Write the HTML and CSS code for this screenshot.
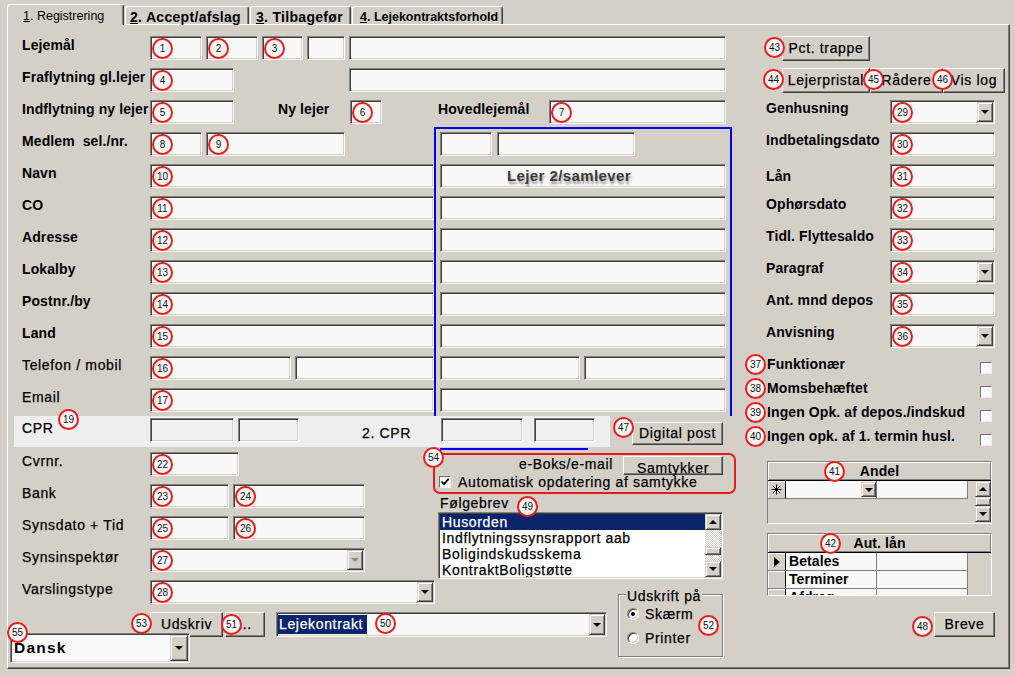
FILE: index.html
```html
<!DOCTYPE html>
<html lang="da">
<head>
<meta charset="utf-8">
<title>Registrering</title>
<link rel="stylesheet" href="styles.css">
</head>
<body>
<div class="win">
  <div class="tabs">
    <div class="tab active"><u>1</u>. Registrering</div>
    <div class="tab t2"><u>2</u>. Accept/afslag</div>
    <div class="tab t3"><u>3</u>. Tilbagefør</div>
    <div class="tab t4"><u>4</u>. Lejekontraktsforhold</div>
  </div>
  <div class="panel">
    <div class="main">
      <div class="row">
        <div class="lbl">Lejemål</div>
        <div class="tb w52"><span class="nb">1</span></div>
        <div class="tb w52 ml4"><span class="nb">2</span></div>
        <div class="tb w41 ml4"><span class="nb">3</span></div>
        <div class="tb w38 ml4"></div>
        <div class="tb w377 ml4"></div>
      </div>
      <div class="row">
        <div class="lbl">Fraflytning gl.lejer</div>
        <div class="tb w84"><span class="nb">4</span></div>
        <div class="tb w377 ml115"></div>
      </div>
      <div class="row">
        <div class="lbl">Indflytning ny lejer</div>
        <div class="tb w84"><span class="nb">5</span></div>
        <div class="lbl nylejer">Ny lejer</div>
        <div class="tb w32"><span class="nb">6</span></div>
        <div class="lbl hoved">Hovedlejemål</div>
        <div class="tb w177"><span class="nb">7</span></div>
      </div>

      <div class="mid">
        <div class="midl">
          <div class="row"><div class="lbl">Medlem&nbsp; sel./nr.</div><div class="tb w52"><span class="nb">8</span></div><div class="tb w139 ml4"><span class="nb">9</span></div></div>
          <div class="row"><div class="lbl">Navn</div><div class="tb w284"><span class="nb">10</span></div></div>
          <div class="row"><div class="lbl">CO</div><div class="tb w284"><span class="nb">11</span></div></div>
          <div class="row"><div class="lbl">Adresse</div><div class="tb w284"><span class="nb">12</span></div></div>
          <div class="row"><div class="lbl">Lokalby</div><div class="tb w284"><span class="nb">13</span></div></div>
          <div class="row"><div class="lbl">Postnr./by</div><div class="tb w284"><span class="nb">14</span></div></div>
          <div class="row"><div class="lbl">Land</div><div class="tb w284"><span class="nb">15</span></div></div>
          <div class="row"><div class="lbl ct">Telefon / mobil</div><div class="tb w141"><span class="nb">16</span></div><div class="tb w139 ml4"></div></div>
          <div class="row"><div class="lbl ct">Email</div><div class="tb w284"><span class="nb">17</span></div></div>
        </div>
        <div class="bluebox">
          <div class="row"><div class="tb w52"></div><div class="tb w138 ml5"></div></div>
          <div class="row"><div class="tb w286 lejer2">Lejer 2/samlever</div></div>
          <div class="row"><div class="tb w286"></div></div>
          <div class="row"><div class="tb w286"></div></div>
          <div class="row"><div class="tb w286"></div></div>
          <div class="row"><div class="tb w286"></div></div>
          <div class="row"><div class="tb w286"></div></div>
          <div class="row"><div class="tb w140"></div><div class="tb w142 ml4"></div></div>
          <div class="row"><div class="tb w286"></div></div>
        </div>
      </div>

      <div class="cprrow">
        <div class="band">
          <div class="ct cprl">CPR<span class="nb nb19">19</span></div>
          <div class="tb tbband w84"></div>
          <div class="tb tbband w61 ml4"></div>
          <div class="ct cpr2">2. CPR</div>
          <div class="tb tbband w82 ml1"></div>
          <div class="tb tbband w61 ml11"></div>
          <div class="blueline"></div>
        </div>
        <div class="btn ct dpost">Digital post<span class="nb nb47">47</span></div>
      </div>

      <div class="lowt">
        <div class="lowl">
          <div class="row"><div class="lbl ct">Cvrnr.</div><div class="tb w89"><span class="nb">22</span></div></div>
          <div class="row"><div class="lbl ct">Bank</div><div class="tb w79"><span class="nb">23</span></div><div class="tb w132 ml4"><span class="nb">24</span></div></div>
          <div class="row"><div class="lbl ct">Synsdato + Tid</div><div class="tb w79"><span class="nb">25</span></div><div class="tb w132 ml4"><span class="nb">26</span></div></div>
          <div class="row"><div class="lbl ct">Synsinspektør</div><div class="tb cb w215"><span class="nb">27</span><span class="arr dis"></span></div></div>
          <div class="row"><div class="lbl ct">Varslingstype</div><div class="tb cb w285"><span class="nb">28</span><span class="arr"></span></div></div>
        </div>
        <div class="lowr">
          <div class="redbox">
            <span class="nb nb54">54</span>
            <div class="rb1"><span class="ct">e-Boks/e-mail</span><div class="btn ct samt">Samtykker</div></div>
            <div class="rb2"><span class="chk on"><svg width="10" height="10" viewBox="0 0 10 10"><path d="M1.5 4.5l2.5 2.6 4.6-5.2" fill="none" stroke="#000" stroke-width="1.8"/></svg></span><span class="ct">Automatisk opdatering af samtykke</span></div>
          </div>
          <div class="folg ct">Følgebrev<span class="nb nb49">49</span></div>
          <div class="lb">
            <div class="lbitems">
              <div class="lbi selected">Husorden</div>
              <div class="lbi">Indflytningssynsrapport aab</div>
              <div class="lbi">Boligindskudsskema</div>
              <div class="lbi">KontraktBoligstøtte</div>
            </div>
            <div class="vsb">
              <div class="sbtn up"></div>
              <div class="track"><div class="thumb"></div></div>
              <div class="sbtn down"></div>
            </div>
          </div>
        </div>
      </div>

      <div class="lowb">
        <div class="bl">
          <div class="urow">
            <div class="btn ct udsk">Udskriv<span class="nb nb53">53</span></div>
            <div class="btn ct dots">...<span class="nb nb51">51</span></div>
            <div class="tb cb w331 lk"><span class="sel ct">Lejekontrakt</span><span class="nb nb50">50</span><span class="arr"></span></div>
          </div>
          <div class="tb cb dansk"><span class="dtxt">Dansk</span><span class="nb nb55">55</span><span class="arr big"></span></div>
        </div>
        <div class="grp">
          <span class="legend ct">Udskrift på</span>
          <div class="rrow"><span class="radio on"></span><span class="ct">Skærm</span></div>
          <div class="rrow"><span class="radio"></span><span class="ct">Printer</span></div>
          <span class="nb nb52">52</span>
        </div>
      </div>
    </div>

    <div class="side">
      <div class="srow"><div class="btn ct pct">Pct. trappe<span class="nb nb43">43</span></div></div>
      <div class="srow mt7">
        <div class="btn ct lp">Lejerpristal<span class="nb nb44">44</span></div>
        <div class="btn ct rad">Rådere<span class="nb nb45">45</span></div>
        <div class="btn ct vis">Vis log<span class="nb nb46">46</span></div>
      </div>
      <div class="sfields">
        <div class="row"><div class="slbl">Genhusning</div><div class="tb cb w105"><span class="nb">29</span><span class="arr"></span></div></div>
        <div class="row"><div class="slbl">Indbetalingsdato</div><div class="tb w105"><span class="nb">30</span></div></div>
        <div class="row"><div class="slbl lan">Lån</div><div class="tb w105"><span class="nb">31</span></div></div>
        <div class="row"><div class="slbl">Ophørsdato</div><div class="tb w105"><span class="nb">32</span></div></div>
        <div class="row"><div class="slbl">Tidl. Flyttesaldo</div><div class="tb w105"><span class="nb">33</span></div></div>
        <div class="row"><div class="slbl">Paragraf</div><div class="tb cb w105"><span class="nb">34</span><span class="arr"></span></div></div>
        <div class="row"><div class="slbl">Ant. mnd depos</div><div class="tb w105"><span class="nb">35</span></div></div>
        <div class="row"><div class="slbl">Anvisning</div><div class="tb cb w105"><span class="nb">36</span><span class="arr"></span></div></div>
      </div>
      <div class="checks">
        <div class="crow"><span class="nb nbc">37</span><span class="clbl">Funktionær</span><span class="chk"></span></div>
        <div class="crow"><span class="nb nbc">38</span><span class="clbl">Momsbehæftet</span><span class="chk"></span></div>
        <div class="crow"><span class="nb nbc">39</span><span class="clbl">Ingen Opk. af depos./indskud</span><span class="chk"></span></div>
        <div class="crow"><span class="nb nbc">40</span><span class="clbl">Ingen opk. af 1. termin husl.</span><span class="chk"></span></div>
      </div>
      <div class="grid andel">
        <div class="ghead">Andel<span class="nb nb41">41</span></div>
        <div class="gbody">
          <div class="gcells">
            <div class="gr">
              <div class="gind"><svg width="11" height="11" viewBox="0 0 11 11"><path d="M5.5 0.5V10.5M0.5 5.5H10.5M1.9 1.9L9.1 9.1M9.1 1.9L1.9 9.1" stroke="#000" stroke-width="1"/></svg></div>
              <div class="gc gcw1 gcombo"><span class="arr sm"></span></div>
              <div class="gc gcw2"></div>
            </div>
          </div>
          <div class="gsb">
            <div class="sbtn up"></div>
            <div class="thumb2"></div>
            <div class="sbtn down"></div>
          </div>
        </div>
      </div>
      <div class="grid aut">
        <div class="ghead">Aut. lån<span class="nb nb42">42</span></div>
        <div class="gbody">
          <div class="gcells">
            <div class="gr"><div class="gind"><span class="tri"></span></div><div class="gc gcw1 gt">Betales</div><div class="gc gcw2"></div></div>
            <div class="gr"><div class="gind"></div><div class="gc gcw1 gt">Terminer</div><div class="gc gcw2"></div></div>
            <div class="gr"><div class="gind"></div><div class="gc gcw1 gt">Afdrag</div><div class="gc gcw2"></div></div>
          </div>
        </div>
      </div>
      <div class="brow"><div class="btn ct breve">Breve<span class="nb nb48">48</span></div></div>
    </div>
  </div>
</div>
</body>
</html>
```
FILE: styles.css
```css
* { box-sizing: border-box; }
html, body { margin: 0; padding: 0; }
body { background: #d4d0c8; font-family: "Liberation Sans", Arial, sans-serif; color: #000; }
.win { width: 1014px; height: 676px; overflow: hidden; background: #d4d0c8; }

/* tabs */
.tabs { display: flex; align-items: flex-start; height: 24px; padding: 4px 0 0 7px; position: relative; z-index: 2; }
.tab { height: 18px; margin-top: 2px; margin-left: 1px; background: #d4d0c8; border-top: 1px solid #fff; border-left: 1px solid #fff; border-right: 1px solid #404040; box-shadow: inset -1px 0 #808080; border-radius: 3px 3px 0 0; font-weight: bold; font-size: 14px; line-height: 16px; padding-top: 2px; white-space: nowrap; letter-spacing: 0.3px; }
.tab.active { height: 21px; margin-top: 0; margin-left: 0; width: 117px; font-weight: normal; font-size: 12.5px; padding-left: 15px; padding-top: 3px; letter-spacing: 0; }
.t2 { width: 124px; padding-left: 4px; }
.t3 { width: 101px; padding-left: 5px; }
.t4 { padding-left: 7px; padding-right: 4px; font-size: 12.5px; letter-spacing: 0; }

/* panel */
.panel { margin-left: 7px; width: 1003px; height: 645px; border-top: 1px solid #fff; border-left: 1px solid #fff; border-right: 1px solid #404040; border-bottom: 1px solid #404040; box-shadow: inset -1px -1px #808080; display: flex; }
.main { width: 737px; flex: none; padding: 11px 0 0 14px; }
.side { width: 262px; flex: none; padding-top: 11px; }

/* rows and labels */
.row { display: flex; align-items: flex-start; height: 24px; }
.row + .row { margin-top: 8px; }
.lbl { width: 128px; flex: none; font-weight: bold; font-size: 14px; line-height: 16px; margin-top: 1px; letter-spacing: 0.1px; white-space: nowrap; }
.ct { font-size: 14px; letter-spacing: 0.65px; font-weight: normal; white-space: nowrap; -webkit-text-stroke: 0.25px #000; }
.lbl.ct { font-size: 14px; letter-spacing: 0.65px; font-weight: normal; }
.nylejer { width: 72px; margin-left: 44px; }
.hoved { width: 111px; margin-left: 56px; }
.slbl { width: 124px; flex: none; font-weight: bold; font-size: 14px; line-height: 16px; letter-spacing: 0.1px; white-space: nowrap; }
.slbl.lan { margin-top: 4px; }

/* text boxes */
.tb { position: relative; flex: none; height: 24px; background: #f8f8f8; border: 1px solid; border-color: #808080 #fff #fff #808080; box-shadow: inset 1px 1px #404040, inset -1px -1px #d4d0c8; }
.tbband { background: #f1f1f1; margin-top: 2px; }
.w32 { width: 32px; } .w38 { width: 38px; } .w41 { width: 41px; } .w52 { width: 52px; }
.w61 { width: 61px; } .w79 { width: 79px; } .w82 { width: 82px; } .w84 { width: 84px; }
.w89 { width: 89px; } .w105 { width: 105px; } .w132 { width: 132px; } .w138 { width: 138px; }
.w139 { width: 139px; } .w140 { width: 140px; } .w141 { width: 141px; } .w142 { width: 142px; }
.w177 { width: 177px; } .w215 { width: 215px; } .w284 { width: 284px; } .w285 { width: 285px; }
.w286 { width: 286px; } .w331 { width: 331px; } .w377 { width: 377px; }
.ml1 { margin-left: 1px; } .ml4 { margin-left: 4px; } .ml5 { margin-left: 5px; } .ml11 { margin-left: 11px; } .ml115 { margin-left: 115px; }
.mt7 { margin-top: 7px; }

/* combo */
.cb { display: flex; padding: 1px; }
.arr { margin-left: auto; flex: none; width: 16px; height: 100%; background: #d4d0c8; border: 1px solid; border-color: #d4d0c8 #404040 #404040 #d4d0c8; box-shadow: inset 1px 1px #fff, inset -1px -1px #808080; display: flex; align-items: center; justify-content: center; }
.arr::after { content: ""; border-left: 4px solid transparent; border-right: 4px solid transparent; border-top: 4px solid #000; }
.arr.dis::after { border-top-color: #8a8a8a; }
.arr.big { width: 18px; }
.arr.sm { width: 15px; height: 15px; }

/* red number badges */
.nb { position: absolute; left: 1px; top: 1px; width: 21px; height: 21px; border: 2px solid #ec1c1c; border-radius: 50%; background: #f9f9f9; font-family: "Liberation Sans", Arial, sans-serif; font-size: 10px; font-weight: normal; letter-spacing: 0; line-height: 17px; text-align: center; color: #111; z-index: 3; -webkit-text-stroke: 0; }
.nb19 { left: 36px; top: -11px; }
.nb47 { left: -20px; top: -6px; }
.nb54 { left: -12px; top: -8px; }
.nb49 { left: 77px; top: 2px; }
.nb53 { left: -20px; top: 0; }
.nb51 { left: -5px; top: 1px; }
.nb50 { left: 98px; top: 0; }
.nb52 { left: 79px; top: 20px; }
.nb55 { left: -4px; top: -12px; }
.nb43 { left: -19px; top: 0; }
.nb44 { left: -20px; top: 0; }
.nb45 { left: -8px; top: 0; }
.nb46 { left: -12px; top: 0; }
.nbc { left: 0; top: 2px; }
.nb41 { left: 56px; top: -1px; }
.nb42 { left: 52px; top: -1px; }
.nb48 { left: -23px; top: 3px; }

/* middle block */
.mid { display: flex; margin-top: 3px; height: 289px; }
.midl { width: 412px; flex: none; padding-top: 5px; }
.bluebox { width: 298px; flex: none; border: 2px solid #0000ee; border-bottom: none; padding: 3px 4px 0 4px; }
.lejer2 { font-weight: bold; font-size: 15px; letter-spacing: 0.4px; color: #3a3a3a; line-height: 22px; padding-left: 66px; text-shadow: 1px 3px 2px #9c9c9c; white-space: nowrap; }

/* CPR row */
.cprrow { display: flex; align-items: flex-start; height: 31px; }
.band { position: relative; display: flex; align-items: flex-start; width: 596px; height: 31px; margin-left: -8px; padding-left: 8px; background: #eeeeee; flex: none; }
.cprl { position: relative; width: 128px; flex: none; margin-top: 4px; line-height: 16px; }
.cpr2 { width: 78px; flex: none; margin-left: 63px; margin-top: 9px; line-height: 16px; }
.blueline { position: absolute; left: 426px; top: 32px; width: 148px; height: 2px; background: #0000ee; }

/* buttons */
.btn { position: relative; flex: none; height: 25px; background: #d4d0c8; border: 1px solid; border-color: #fff #404040 #404040 #fff; box-shadow: inset -1px -1px #808080; text-align: center; line-height: 23px; white-space: nowrap; }
.dpost { margin-left: 22px; margin-top: 6px; width: 91px; height: 23px; line-height: 21px; }

/* lower area */
.lowt { display: flex; align-items: flex-start; }
.lowl { width: 411px; flex: none; padding-top: 5px; }
.lowr { width: 303px; flex: none; }
.redbox { position: relative; width: 303px; height: 41px; margin-top: 6px; border: 2px solid #e51c1c; border-radius: 7px; }
.rb1 { display: flex; justify-content: flex-end; align-items: flex-start; height: 18px; }
.rb1 > .ct { line-height: 16px; margin-top: 1px; }
.samt { width: 100px; height: 19px; margin-top: -1px; margin-left: 10px; margin-right: 11px; line-height: 10px; padding-top: 3px; }
.rb2 { display: flex; align-items: center; height: 12px; margin-top: 3px; padding-left: 4px; }
.rb2 .ct { line-height: 12px; }
.chk { flex: none; width: 12px; height: 12px; background: #f8f8f8; border: 1px solid; border-color: #707070 #f0f0f0 #f0f0f0 #707070; display: flex; align-items: center; justify-content: center; }
.rb2 .chk { margin-right: 7px; }
.folg { position: relative; height: 18px; margin-left: 7px; line-height: 18px; }
.lb { display: flex; width: 285px; height: 67px; margin-left: 5px; background: #fff; border: 1px solid; border-color: #808080 #fff #fff #808080; box-shadow: inset 1px 1px #404040, inset -1px -1px #d4d0c8; padding: 1px; }
.lbitems { flex: 1; overflow: hidden; }
.lbi { height: 16px; font-size: 14px; letter-spacing: 0.65px; line-height: 16px; padding-left: 2px; white-space: nowrap; -webkit-text-stroke: 0.25px #000; }
.lbi.selected { background: #0a246a; color: #fff; -webkit-text-stroke: 0.25px #fff; }
.vsb { width: 16px; flex: none; display: flex; flex-direction: column; }
.sbtn { flex: none; height: 16px; background: #d4d0c8; border: 1px solid; border-color: #d4d0c8 #404040 #404040 #d4d0c8; box-shadow: inset 1px 1px #fff, inset -1px -1px #808080; display: flex; align-items: center; justify-content: center; }
.sbtn.up::after { content: ""; border-left: 4px solid transparent; border-right: 4px solid transparent; border-bottom: 4px solid #000; }
.sbtn.down::after { content: ""; border-left: 4px solid transparent; border-right: 4px solid transparent; border-top: 4px solid #000; }
.track { flex: 1; background: repeating-conic-gradient(#fff 0 25%, #d4d0c8 0 50%) 0 0 / 2px 2px; }
.thumb { margin-top: 17px; height: 8px; background: #d4d0c8; border: 1px solid; border-color: #d4d0c8 #404040 #404040 #d4d0c8; box-shadow: inset 1px 1px #fff, inset -1px -1px #808080; }

.lowb { display: flex; align-items: flex-start; }
.bl { width: 589px; flex: none; }
.urow { display: flex; margin-top: 8px; height: 25px; padding-left: 128px; }
.udsk { width: 73px; }
.dots { width: 40px; margin-left: 2px; letter-spacing: 0.5px; }
.lk { margin-left: 11px; height: 25px; }
.sel { background: #0a246a; color: #fff; height: 19px; margin-top: 1px; padding: 0 4px 0 1px; line-height: 19px; -webkit-text-stroke: 0.25px #fff; }
.dansk { width: 180px; height: 30px; margin-top: -4px; margin-left: -12px; background: #fafafa; }
.dtxt { font-weight: bold; font-size: 15.5px; letter-spacing: 1.2px; line-height: 26px; padding-left: 2px; }
.grp { position: relative; flex: none; margin-left: 7px; margin-top: -10px; width: 105px; height: 63px; border: 1px solid #808080; box-shadow: inset 1px 1px #fff, 1px 1px #fff; padding: 9px 0 0 8px; }
.legend { position: absolute; left: 7px; top: -8px; background: #d4d0c8; padding: 0 1px; line-height: 18px; }
.rrow { display: flex; align-items: center; height: 20px; }
.rrow + .rrow { margin-top: 4px; }
.radio { flex: none; width: 12px; height: 12px; margin-right: 6px; border-radius: 50%; border: 1px solid; border-color: #808080 #fff #fff #808080; box-shadow: inset 1px 1px #404040, inset -1px -1px #d4d0c8; background: #fff; display: flex; align-items: center; justify-content: center; }
.radio.on::after { content: ""; width: 4px; height: 4px; border-radius: 50%; background: #000; }

/* side column */
.srow { display: flex; height: 25px; padding-left: 37px; }
.pct { width: 88px; }
.lp { width: 88px; }
.rad { width: 73px; }
.vis { width: 62px; }
.sfields { margin-top: 7px; padding-left: 21px; }
.checks { margin-top: 4px; }
.crow { position: relative; display: flex; align-items: flex-start; height: 24px; padding-left: 22px; }
.clbl { font-weight: bold; font-size: 14px; line-height: 24px; letter-spacing: 0.1px; white-space: nowrap; }
.crow .chk { margin-left: auto; margin-right: 15px; margin-top: 10px; }

.grid { margin-left: 22px; width: 225px; height: 63px; border: 1px solid; border-color: #808080 #fff #fff #808080; }
.andel { margin-top: 13px; }
.aut { margin-top: 9px; }
.ghead { position: relative; height: 19px; border-bottom: 1px solid #000; background: #d4d0c8; box-shadow: inset 1px 1px #fff, inset -1px -1px #808080; text-align: center; font-weight: bold; font-size: 14px; line-height: 18px; letter-spacing: 0.1px; }
.gbody { display: flex; height: 42px; overflow: hidden; }
.gcells { width: 200px; flex: none; }
.gr { display: flex; height: 18px; }
.gind { width: 18px; flex: none; height: 18px; background: #d4d0c8; border-right: 1px solid #000; border-bottom: 1px solid #808080; box-shadow: inset 1px 1px #fff; display: flex; align-items: center; justify-content: center; }
.tri { border-top: 5px solid transparent; border-bottom: 5px solid transparent; border-left: 6px solid #000; margin-left: 1px; }
.gc { flex: none; height: 18px; background: #f8f8f8; border-right: 1px solid #808080; border-bottom: 1px solid #808080; }
.gcw1 { width: 91px; }
.gcw2 { width: 91px; }
.gcombo { display: flex; align-items: center; padding: 0; }
.gt { font-weight: bold; font-size: 14px; line-height: 17px; padding-left: 3px; letter-spacing: 0.1px; white-space: nowrap; }
.gsb { margin-left: auto; width: 16px; flex: none; display: flex; flex-direction: column; }
.thumb2 { height: 9px; flex: none; background: #d4d0c8; border: 1px solid; border-color: #d4d0c8 #404040 #404040 #d4d0c8; box-shadow: inset 1px 1px #fff, inset -1px -1px #808080; }
.brow { display: flex; margin-top: 16px; padding-left: 189px; }
.breve { width: 61px; }
```
